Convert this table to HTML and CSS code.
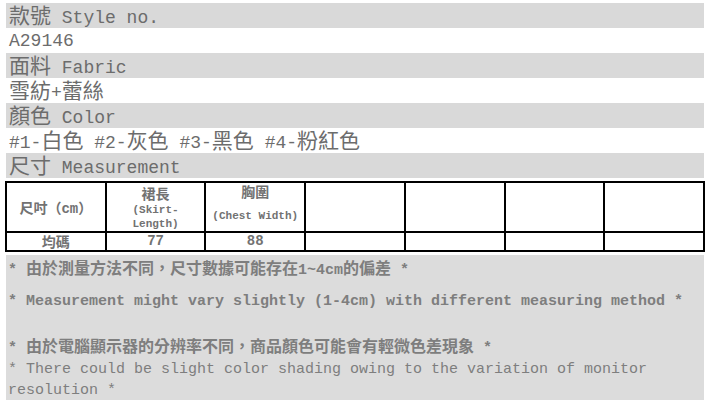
FILE: index.html
```html
<!DOCTYPE html>
<html lang="zh-Hant">
<head>
<meta charset="utf-8">
<title>A29146</title>
<link rel="stylesheet" href="styles.css">
</head>
<body>
<div class="page">
  <div class="row band"><span class="zh">款號</span> Style no.</div>
  <div class="row">A29146</div>
  <div class="row band"><span class="zh">面料</span> Fabric</div>
  <div class="row"><span class="zh">雪紡</span>+<span class="zh">蕾絲</span></div>
  <div class="row band"><span class="zh">顏色</span> Color</div>
  <div class="row">#1-<span class="zh">白色</span> #2-<span class="zh">灰色</span> #3-<span class="zh">黑色</span> #4-<span class="zh">粉紅色</span></div>
  <div class="row band"><span class="zh">尺寸</span> Measurement</div>

  <table class="size">
    <colgroup>
      <col><col><col><col><col><col><col>
    </colgroup>
    <tr class="head">
      <td><span class="cjk">尺吋</span>（cm）</td>
      <td><div class="cjk">裙長</div><div class="en">(Skirt-<br>Length)</div></td>
      <td class="top"><div class="cjk up">胸圍</div><div class="en en-gap">(Chest Width)</div></td>
      <td></td><td></td><td></td><td></td>
    </tr>
    <tr class="body">
      <td class="cjk">均碼</td>
      <td>77</td>
      <td>88</td>
      <td></td><td></td><td></td><td></td>
    </tr>
  </table>

  <div class="notes">
    <p class="n1">* <span class="nz">由於測量方法不同，尺寸數據可能存在</span>1~4cm<span class="nz">的偏差</span> *</p>
    <p class="n2">* Measurement might vary slightly (1-4cm) with different measuring method *</p>
    <p class="n3">* <span class="nz">由於電腦顯示器的分辨率不同，商品顏色可能會有輕微色差現象</span> *</p>
    <p class="n4">* There could be slight color shading owing to the variation of monitor resolution *</p>
  </div>
</div>
</body>
</html>
```

FILE: styles.css
```css
html, body {
  margin: 0;
  padding: 0;
  background: #ffffff;
}

.page {
  padding: 3px 6px 0 5px;
  font-family: "Liberation Mono", "Noto Sans CJK TC", monospace;
  color: #6c6c6c;
}

.row {
  box-sizing: border-box;
  height: 25px;
  padding-top: 1px;
  line-height: 24px;
  font-size: 18px;
  padding-left: 3px;
  margin-left: 1px;
  white-space: nowrap;
}

.band {
  background: #d9d9d9;
}

.zh {
  font-family: "Noto Sans CJK TC", sans-serif;
  font-size: 21px;
  line-height: 1;
}

.size {
  margin-top: 3px;
  width: 700px;
  table-layout: fixed;
  border-collapse: collapse;
  font-family: "Liberation Mono", "Noto Sans CJK TC", monospace;
  font-weight: bold;
  color: #727272;
}

.size td {
  border: 2px solid #000;
  padding: 0;
  text-align: center;
  vertical-align: middle;
}

.size .head td {
  height: 46px;
  font-size: 14px;
}

.size .head td.top {
  vertical-align: top;
}

.size .body td {
  height: 17px;
  font-size: 14px;
  line-height: 17px;
}

.cjk {
  font-family: "Noto Sans CJK TC", sans-serif;
  font-size: 14px;
  line-height: 20px;
}

.up {
  margin-top: -2px;
}

.en {
  font-family: "Liberation Mono", monospace;
  font-size: 11px;
  line-height: 14px;
}

.en-gap {
  margin-top: 8px;
}

.notes {
  margin-top: 3px;
  margin-left: 1px;
  background: #dcdcdc;
  height: 145px;
  padding: 4px 0 0 2px;
  box-sizing: border-box;
  font-size: 15px;
  line-height: 21px;
  color: #7e7e7e;
  font-weight: bold;
}

.notes p {
  margin: 0;
}

.nz {
  font-family: "Noto Sans CJK TC", sans-serif;
  font-size: 16px;
  font-weight: bold;
  line-height: 1;
}

.notes p.n2 {
  margin-top: 10px;
}

.notes p.n3 {
  margin-top: 25px;
}

.n4 {
  font-weight: normal;
}
```
